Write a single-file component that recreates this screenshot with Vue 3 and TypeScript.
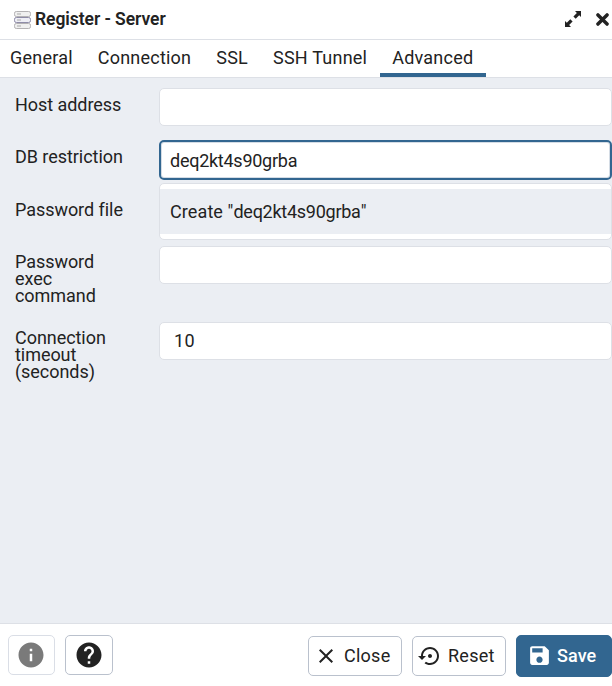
<script setup lang="ts">
import { ref } from 'vue'

const tabs: string[] = ['General', 'Connection', 'SSL', 'SSH Tunnel', 'Advanced']
const active = ref('Advanced')
const host = ref('')
const restriction = ref('deq2kt4s90grba')
const execCommand = ref('')
const timeout = ref('10')
</script>

<template>
  <div class="dialog">
    <header class="title-bar">
      <svg class="server" width="17" height="19" viewBox="0 0 17 19">
        <g fill="#f0f0f0" stroke="#b4b2b4">
          <rect x=".5" y=".5" width="16" height="5" rx="1.8" />
          <rect x=".5" y="12.5" width="16" height="5" rx="1.8" />
          <rect x=".5" y="6.5" width="16" height="5" rx="1.8" stroke="#8f8ca8" fill="#eeeef5" />
        </g>
        <path d="M3 3h4M3 9h4M3 15h4" stroke="#aaa" />
      </svg>
      <h1>Register - Server</h1>
      <svg class="expand" width="16" height="16" viewBox="0 0 16 16" fill="#222">
        <path d="M10 0h6v6l-1.800-1.800-3.500 3.500-2.300-2.300 3.500-3.500zM0 10l1.800 1.800 3.500-3.500 2.300 2.300-3.500 3.500L6 16H0z" />
      </svg>
      <svg class="dismiss" width="13" height="13" viewBox="0 0 12 12">
        <path d="M1.800 1.800l8.400 8.400M10.200 1.800l-8.400 8.400" stroke="#222" stroke-width="3.200" stroke-linecap="round" />
      </svg>
    </header>
    <nav class="tabs">
      <button v-for="tab in tabs" :key="tab" class="tab" :class="{ active: tab === active }" @click="active = tab">{{ tab }}</button>
    </nav>
    <main class="form">
      <div class="row">
        <label>Host address</label>
        <input v-model="host" class="field" />
      </div>
      <div class="row tall">
        <label>DB restriction</label>
        <div class="select">
          <input v-model="restriction" class="field focused" />
          <div class="menu"><div class="option">Create "<span class="typed">{{ restriction }}</span>"</div></div>
        </div>
      </div>
      <div class="row tall">
        <label>Password file</label>
      </div>
      <div class="row multi">
        <label>Password exec command</label>
        <input v-model="execCommand" class="field" />
      </div>
      <div class="row multi">
        <label>Connection timeout (seconds)</label>
        <input v-model="timeout" class="field number" />
      </div>
    </main>
    <footer class="actions">
      <button class="btn icon-btn disabled">
        <svg width="30" height="30" viewBox="0 0 24 24" fill="#7a7a7a"><path d="M12 2C6.480 2 2 6.480 2 12s4.480 10 10 10 10-4.480 10-10S17.520 2 12 2zm1 15h-2v-6h2v6zm0-8h-2V7h2v2z" /></svg>
      </button>
      <button class="btn icon-btn help">
        <svg width="30" height="30" viewBox="0 0 24 24" fill="#222"><path d="M12 2C6.480 2 2 6.480 2 12s4.480 10 10 10 10-4.480 10-10S17.520 2 12 2zm1 17h-2v-2h2v2zm2.070-7.750l-.9.920C13.450 12.900 13 13.500 13 15h-2v-.5c0-1.100.45-2.100 1.170-2.830l1.240-1.260c.37-.36.59-.86.59-1.410 0-1.100-.9-2-2-2s-2 .9-2 2H8c0-2.210 1.790-4 4-4s4 1.790 4 4c0 .88-.36 1.680-.93 2.250z" /></svg>
      </button>
      <span class="spacer"></span>
      <button class="btn close">
        <svg width="24" height="24" viewBox="0 0 24 24" fill="#222"><path d="M19 6.410L17.590 5 12 10.590 6.410 5 5 6.410 10.590 12 5 17.590 6.410 19 12 13.410 17.590 19 19 17.590 13.410 12z" /></svg>
        <span>Close</span>
      </button>
      <button class="btn reset">
        <svg width="24" height="24" viewBox="0 0 24 24" fill="#222"><path d="M14 12c0-1.100-.9-2-2-2s-2 .9-2 2 .9 2 2 2 2-.9 2-2zm-2-9c-4.970 0-9 4.030-9 9H0l4 4 4-4H5c0-3.870 3.130-7 7-7s7 3.130 7 7-3.130 7-7 7c-1.510 0-2.910-.49-4.060-1.300l-1.420 1.440C8.040 20.300 9.940 21 12 21c4.970 0 9-4.030 9-9s-4.030-9-9-9z" /></svg>
        <span>Reset</span>
      </button>
      <button class="btn save">
        <svg width="25" height="25" viewBox="0 0 24 24" fill="#fff"><path d="M17 3H5c-1.110 0-2 .9-2 2v14c0 1.100.89 2 2 2h14c1.100 0 2-.9 2-2V7l-4-4zm-5 16c-1.660 0-3-1.340-3-3s1.340-3 3-3 3 1.340 3 3-1.340 3-3 3zm3-10H5V5h10v4z" /></svg>
        <span>Save</span>
      </button>
    </footer>
  </div>
</template>

<style>
body {
  overflow: hidden;
}
</style>

<style scoped>
.dialog {
  display: flex;
  flex-direction: column;
  width: 612px;
  height: 686px;
  background: #fff;
  color: #222;
  font: 18px/20px Roboto, sans-serif;
  letter-spacing: 0.25px;
}
.dialog * {
  box-sizing: border-box;
}
.title-bar {
  display: flex;
  align-items: center;
  height: 40px;
  padding: 0 3px 1px 14px;
  border-bottom: 1px solid #dde0e6;
}
.server {
  margin-top: 2px;
}
h1 {
  flex: 1;
  margin: 0 0 0 4px;
  font-size: 17.5px;
  font-weight: 600;
  letter-spacing: -0.06px;
}
.expand {
  margin-right: 15px;
}
button,
input {
  font: inherit;
  letter-spacing: inherit;
  color: inherit;
}
.tabs {
  display: flex;
  height: 38px;
  border-bottom: 1px solid #dde0e6;
}
.tab {
  padding: 2px 12.5px 0;
  border: 0;
  border-bottom: 4px solid transparent;
  background: none;
  letter-spacing: 0.22px;
}
.tab:first-child {
  padding-left: 10px;
}
.tab.active {
  border-bottom-color: #326690;
}
.form {
  flex: 1;
  padding: 10px 0 0 15px;
  background: #ebeef3;
  letter-spacing: -0.05px;
}
.row {
  display: grid;
  grid-template-columns: 112px 453px;
  column-gap: 32px;
  align-items: start;
  height: 52px;
}
.row.tall {
  height: 53px;
}
.row.multi {
  height: 76px;
}
label {
  padding-top: 8px;
  line-height: 17px;
}
.multi label {
  padding-top: 7px;
}
.field {
  width: 453px;
  height: 38px;
  padding: 0 14px;
  border: 1px solid #dde0e6;
  border-radius: 5px;
  outline: 0;
  background: #fff;
}
.field.number {
  padding-bottom: 2px;
  letter-spacing: 0.3px;
}
.field.focused {
  display: block;
  height: 40px;
  padding: 0 9px;
  border: 2px solid #326690;
  box-shadow: inset 0 0 0 1px #d4dce5;
  letter-spacing: -0.26px;
}
.select {
  position: relative;
}
.menu {
  position: absolute;
  top: 43px;
  left: 0;
  width: 453px;
  height: 57px;
  padding: 5px 0;
  border: 1px solid #dde0e6;
  border-radius: 5px;
  background: #fff;
}
.option {
  height: 45px;
  padding-left: 10px;
  background: #ebeef3;
  line-height: 45px;
  letter-spacing: 0.1px;
}
.typed {
  letter-spacing: -0.26px;
}
.actions {
  display: flex;
  align-items: center;
  height: 63px;
  padding: 1px 0 0 8px;
  border-top: 1px solid #dde0e6;
}
.btn {
  display: flex;
  align-items: center;
  height: 40px;
  padding: 0;
  border: 1px solid #bac1cd;
  border-radius: 5px;
  background: #fff;
}
.icon-btn {
  justify-content: center;
  width: 47px;
  margin-bottom: 1px;
}
.disabled {
  padding-right: 1px;
  border-color: #dadee6;
}
.help {
  width: 48px;
  margin-left: 10px;
}
.spacer {
  flex: 1;
}
.close,
.reset {
  width: 94px;
  padding-left: 5px;
}
.close span,
.reset span {
  margin-left: 6px;
}
.reset {
  margin: 0 10px;
}
.save {
  width: 96px;
  height: 42px;
  padding-left: 10px;
  border-color: #326690;
  background: #326690;
  color: #fff;
  font-weight: 500;
}
.save span {
  margin-left: 5px;
  letter-spacing: 0.1px;
}
</style>
